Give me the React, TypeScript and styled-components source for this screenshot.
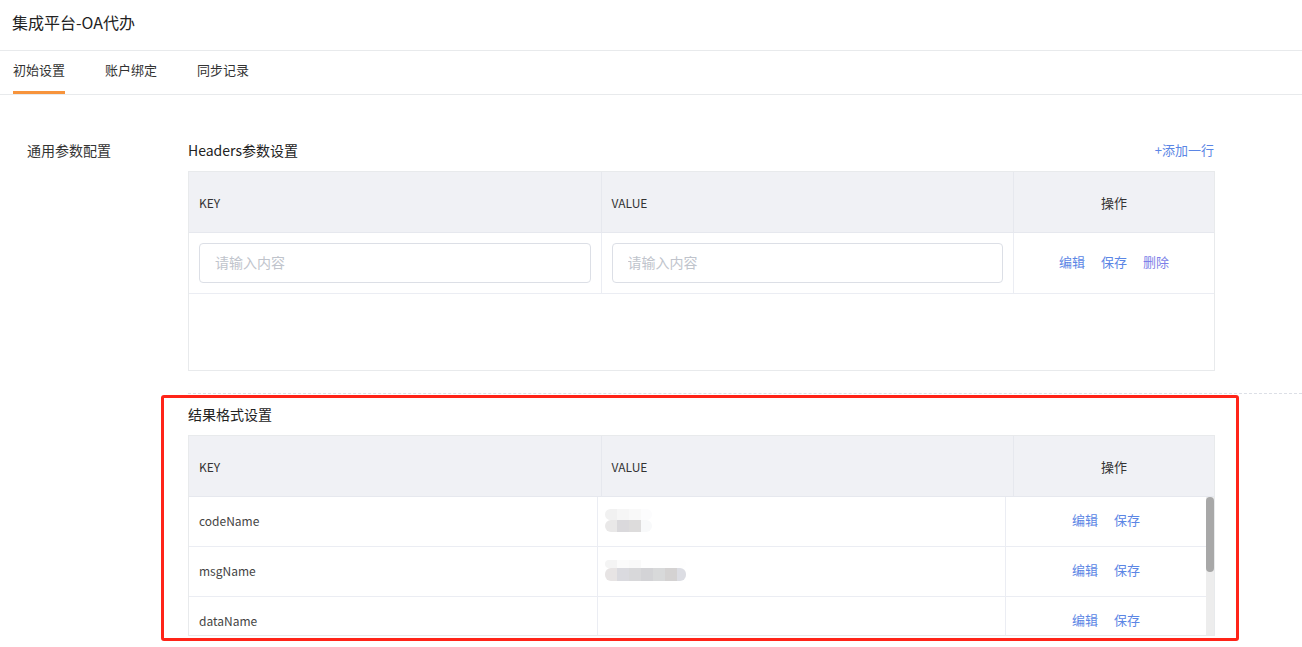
import React from 'react';
import styled, { createGlobalStyle } from 'styled-components';

const Global = createGlobalStyle`
  html, body { margin: 0; padding: 0; background: #fff; }
  body { font-family: "Noto Sans CJK SC", "Liberation Sans", sans-serif; color: #333; }
  * { box-sizing: border-box; }
`;

const Page = styled.div`
  width: 1302px;
  height: 647px;
  overflow: hidden;
`;

const TopBar = styled.div`
  height: 51px;
  padding: 0 0 6px 12px;
  display: flex;
  align-items: center;
  font-size: 16px;
  line-height: 22px;
  color: #222;
  border-bottom: 1px solid #e8eaec;
`;

const Tabs = styled.div`
  height: 44px;
  padding-left: 13px;
  display: flex;
  gap: 40px;
  border-bottom: 1px solid #e8eaec;
`;

const Tab = styled.div<{ $active?: boolean }>`
  height: 43px;
  display: flex;
  align-items: center;
  padding-bottom: 2px;
  font-size: 13px;
  line-height: 18px;
  color: #333;
  border-bottom: 3px solid ${p => (p.$active ? '#f7943c' : 'transparent')};
`;

const Main = styled.div`
  display: flex;
`;

const SideLabel = styled.div`
  width: 188px;
  flex: none;
  padding: 45px 0 0 27px;
  font-size: 14px;
  line-height: 20px;
  color: #333;
`;

const Content = styled.div`
  flex: 1;
  padding-top: 46px;
`;

const Block = styled.div`
  margin-right: 87px;
`;

const TitleRow = styled.div`
  height: 20px;
  margin-bottom: 10px;
  display: flex;
  justify-content: space-between;
  align-items: center;
  padding-bottom: 2px;
`;

const Title = styled.div`
  font-size: 14px;
  line-height: 20px;
  color: #222;
`;

const AddLink = styled.a`
  margin-right: 1px;
  font-size: 13px;
  line-height: 20px;
  color: #5b86e5;
  cursor: pointer;
`;

const Table = styled.div`
  border: 1px solid #e8eaec;
`;

const HeadRow = styled.div`
  display: grid;
  grid-template-columns: 1fr 1fr 200px;
  height: 61px;
  background: #f0f1f5;
  border-bottom: 1px solid #e6e8ee;
`;

const HeadCell = styled.div<{ $center?: boolean }>`
  display: flex;
  align-items: center;
  justify-content: ${p => (p.$center ? 'center' : 'flex-start')};
  padding: 0 10px;
  font-size: ${p => (p.$center ? '13px' : '12px')};
  color: #333;
  border-right: 1px solid #e6e8ee;
  &:last-child { border-right: none; }
`;

const BodyRow = styled.div<{ $h: number }>`
  display: grid;
  grid-template-columns: 1fr 1fr 200px;
  flex: none;
  height: ${p => p.$h}px;
  border-bottom: 1px solid #ebedf3;
`;

const Cell = styled.div<{ $center?: boolean; $field?: boolean }>`
  display: flex;
  align-items: center;
  justify-content: ${p => (p.$center ? 'center' : 'flex-start')};
  padding: 0 10px ${p => (p.$field ? '0' : '3px')};
  font-size: 12px;
  color: #444;
  border-right: 1px solid #ebedf3;
  &:last-child { border-right: none; }
`;

const Input = styled.input`
  width: 100%;
  height: 40px;
  border: 1px solid #dcdfe6;
  border-radius: 4px;
  padding: 0 15px 2px;
  font-family: inherit;
  font-size: 14px;
  color: #333;
  outline: none;
  &::placeholder { color: #c0c4cc; }
`;

const Actions = styled.div`
  display: flex;
  gap: 16px;
`;

const Action = styled.a<{ $danger?: boolean }>`
  font-size: 13px;
  line-height: 18px;
  color: ${p => (p.$danger ? '#7d7fe8' : '#5b86e5')};
  cursor: pointer;
`;

const EmptyArea = styled.div`
  height: 76px;
`;

const Divider = styled.div`
  margin-top: 22px;
  border-top: 1px dashed #dcdfe6;
`;

const Section = styled.div`
  position: relative;
  padding-top: 11px;
`;

const Highlight = styled.div`
  position: absolute;
  left: -27px;
  top: 1px;
  width: 1078px;
  height: 246px;
  border: 3px solid #ff2418;
  border-radius: 3px;
  pointer-events: none;
`;

const ScrollArea = styled.div`
  display: flex;
  height: 138px;
`;

const ScrollRows = styled.div`
  flex: 1;
  display: flex;
  flex-direction: column;
  overflow: hidden;
`;

const ScrollTrack = styled.div`
  width: 8px;
  flex: none;
  background: #ededed;
`;

const ScrollThumb = styled.div`
  height: 75px;
  border-radius: 4px;
  background: #a8a8a8;
`;

const Mosaic = styled.div`
  display: flex;
  flex-direction: column;
  margin-left: -3px;
  filter: blur(0.6px);
`;

const MosaicLine = styled.div<{ $h: number }>`
  display: flex;
  height: ${p => p.$h}px;
`;

const MosaicCell = styled.div<{ $c: string; $w: number }>`
  width: ${p => p.$w}px;
  background: ${p => p.$c};
  &:first-child { border-radius: 6px 0 0 6px; }
  &:last-child { border-radius: 0 6px 6px 0; }
`;

type MosaicData = { h: number; cells: [string, number][] }[];

const mosaic1: MosaicData = [
  { h: 11, cells: [['#f1f1f1', 12], ['#f6f6f6', 12], ['#f9f9f9', 12], ['#fcfcfd', 11]] },
  { h: 12, cells: [['#e9e8e8', 12], ['#dad9dc', 12], ['#dddcdc', 12], ['#f8f9fa', 11]] },
];

const mosaic2: MosaicData = [
  { h: 8, cells: [['#f4f4f4', 12], ['#fbfbfb', 12], ['#f9f9f9', 12], ['#fefefe', 12], ['#fefefe', 12], ['#fefefe', 12], ['#fefefe', 9]] },
  { h: 13, cells: [['#e7e4e4', 12], ['#dadadf', 12], ['#d8d8da', 12], ['#d3d3d6', 12], ['#d8d9da', 12], ['#d4d2d2', 12], ['#dcdde3', 9]] },
];

const Blurred: React.FC<{ data: MosaicData }> = ({ data }) => (
  <Mosaic>
    {data.map((line, i) => (
      <MosaicLine key={i} $h={line.h}>
        {line.cells.map(([c, w], j) => (
          <MosaicCell key={j} $c={c} $w={w} />
        ))}
      </MosaicLine>
    ))}
  </Mosaic>
);

const resultRows: { key: string; value?: MosaicData }[] = [
  { key: 'codeName', value: mosaic1 },
  { key: 'msgName', value: mosaic2 },
  { key: 'dataName' },
];

const TableHead: React.FC = () => (
  <HeadRow>
    <HeadCell>KEY</HeadCell>
    <HeadCell>VALUE</HeadCell>
    <HeadCell $center>操作</HeadCell>
  </HeadRow>
);

export default function App() {
  return (
    <Page>
      <Global />
      <TopBar>集成平台-OA代办</TopBar>
      <Tabs>
        <Tab $active>初始设置</Tab>
        <Tab>账户绑定</Tab>
        <Tab>同步记录</Tab>
      </Tabs>
      <Main>
        <SideLabel>通用参数配置</SideLabel>
        <Content>
          <Block>
            <TitleRow>
              <Title>Headers参数设置</Title>
              <AddLink>+添加一行</AddLink>
            </TitleRow>
            <Table>
              <TableHead />
              <BodyRow $h={61}>
                <Cell $field>
                  <Input placeholder="请输入内容" />
                </Cell>
                <Cell $field>
                  <Input placeholder="请输入内容" />
                </Cell>
                <Cell $center>
                  <Actions>
                    <Action>编辑</Action>
                    <Action>保存</Action>
                    <Action $danger>删除</Action>
                  </Actions>
                </Cell>
              </BodyRow>
              <EmptyArea />
            </Table>
          </Block>
          <Divider />
          <Section>
            <Highlight />
            <Block>
              <TitleRow>
                <Title>结果格式设置</Title>
              </TitleRow>
              <Table>
                <TableHead />
                <ScrollArea>
                  <ScrollRows>
                    {resultRows.map(r => (
                      <BodyRow key={r.key} $h={50}>
                        <Cell>{r.key}</Cell>
                        <Cell>{r.value && <Blurred data={r.value} />}</Cell>
                        <Cell $center>
                          <Actions>
                            <Action>编辑</Action>
                            <Action>保存</Action>
                          </Actions>
                        </Cell>
                      </BodyRow>
                    ))}
                  </ScrollRows>
                  <ScrollTrack>
                    <ScrollThumb />
                  </ScrollTrack>
                </ScrollArea>
              </Table>
            </Block>
          </Section>
        </Content>
      </Main>
    </Page>
  );
}
